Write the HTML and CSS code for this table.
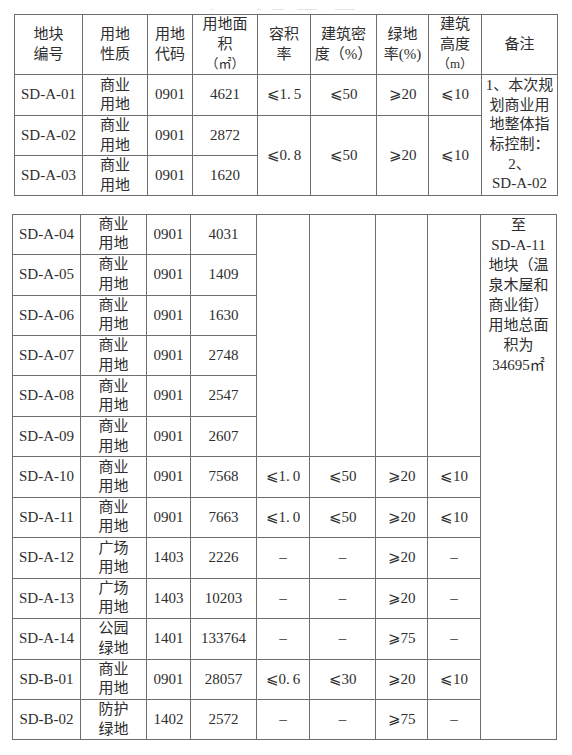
FILE: index.html
```html
<!DOCTYPE html>
<html lang="zh-CN">
<head>
<meta charset="utf-8">
<title>用地指标表</title>
<link rel="stylesheet" href="styles.css">
</head>
<body>
<div class="page">
  <div class="cutline">
    <span class="mk m1"></span><span class="mk m2"></span><span class="mk m3"></span><span class="mk m4"></span><span class="mk m5"></span>
  </div>
  <table class="grid t1">
    <colgroup>
      <col class="c1"><col class="c2"><col class="c3"><col class="c4"><col class="c5"><col class="c6"><col class="c7"><col class="c8"><col class="c9">
    </colgroup>
    <tr class="head">
      <td>地块<br>编号</td>
      <td>用地<br>性质</td>
      <td>用地<br>代码</td>
      <td>用地面<br>积<br><span class="unit">（㎡）</span></td>
      <td>容积<br>率</td>
      <td>建筑密<br>度（%）</td>
      <td>绿地<br>率(%)</td>
      <td>建筑<br>高度<br><span class="unit">（m）</span></td>
      <td>备注</td>
    </tr>
    <tr class="r41">
      <td>SD-A-01</td><td>商业<br>用地</td><td>0901</td><td>4621</td><td>⩽1.&#8201;5</td><td>⩽50</td><td>⩾20</td><td>⩽10</td>
      <td rowspan="3" class="note">1、本次规<br>划商业用<br>地整体指<br>标控制：<br>2、<br>SD-A-02</td>
    </tr>
    <tr class="r40">
      <td>SD-A-02</td><td>商业<br>用地</td><td>0901</td><td>2872</td>
      <td rowspan="2">⩽0.&#8201;8</td><td rowspan="2">⩽50</td><td rowspan="2">⩾20</td><td rowspan="2">⩽10</td>
    </tr>
    <tr class="r40">
      <td>SD-A-03</td><td>商业<br>用地</td><td>0901</td><td>1620</td>
    </tr>
  </table>

  <table class="grid t2">
    <colgroup>
      <col class="d1"><col class="d2"><col class="d3"><col class="d4"><col class="d5"><col class="d6"><col class="d7"><col class="d8"><col class="d9">
    </colgroup>
    <tr>
      <td>SD-A-04</td><td>商业<br>用地</td><td>0901</td><td>4031</td>
      <td rowspan="6"></td><td rowspan="6"></td><td rowspan="6"></td><td rowspan="6"></td>
      <td rowspan="13" class="note top">至<br>SD-A-11<br>地块（温<br>泉木屋和<br>商业街）<br>用地总面<br>积为<br>34695㎡</td>
    </tr>
    <tr><td>SD-A-05</td><td>商业<br>用地</td><td>0901</td><td>1409</td></tr>
    <tr><td>SD-A-06</td><td>商业<br>用地</td><td>0901</td><td>1630</td></tr>
    <tr><td>SD-A-07</td><td>商业<br>用地</td><td>0901</td><td>2748</td></tr>
    <tr><td>SD-A-08</td><td>商业<br>用地</td><td>0901</td><td>2547</td></tr>
    <tr><td>SD-A-09</td><td>商业<br>用地</td><td>0901</td><td>2607</td></tr>
    <tr><td>SD-A-10</td><td>商业<br>用地</td><td>0901</td><td>7568</td><td>⩽1.&#8201;0</td><td>⩽50</td><td>⩾20</td><td>⩽10</td></tr>
    <tr><td>SD-A-11</td><td>商业<br>用地</td><td>0901</td><td>7663</td><td>⩽1.&#8201;0</td><td>⩽50</td><td>⩾20</td><td>⩽10</td></tr>
    <tr><td>SD-A-12</td><td>广场<br>用地</td><td>1403</td><td>2226</td><td>–</td><td>–</td><td>⩾20</td><td>–</td></tr>
    <tr><td>SD-A-13</td><td>广场<br>用地</td><td>1403</td><td>10203</td><td>–</td><td>–</td><td>⩾20</td><td>–</td></tr>
    <tr><td>SD-A-14</td><td>公园<br>绿地</td><td>1401</td><td>133764</td><td>–</td><td>–</td><td>⩾75</td><td>–</td></tr>
    <tr><td>SD-B-01</td><td>商业<br>用地</td><td>0901</td><td>28057</td><td>⩽0.&#8201;6</td><td>⩽30</td><td>⩾20</td><td>⩽10</td></tr>
    <tr><td>SD-B-02</td><td>防护<br>绿地</td><td>1402</td><td>2572</td><td>–</td><td>–</td><td>⩾75</td><td>–</td></tr>
  </table>
</div>
</body>
</html>
```

FILE: styles.css
```css
html, body {
  margin: 0;
  padding: 0;
  background: #ffffff;
}

.page {
  display: flex;
  flex-direction: column;
  width: 572px;
  height: 755px;
  overflow: hidden;
  font-family: "Liberation Serif", "DejaVu Serif", "Noto Sans CJK SC", serif;
  color: #2e2e2e;
}

.cutline {
  height: 14px;
  position: relative;
}

.mk {
  position: absolute;
  top: 9px;
  height: 1px;
  background: #e4e4e4;
}
.m1 { left: 210px; width: 3px; }
.m2 { left: 257px; width: 4px; }
.m3 { left: 272px; width: 12px; }
.m4 { left: 297px; width: 20px; }
.m5 { left: 335px; width: 20px; }

.grid {
  border-collapse: collapse;
  table-layout: fixed;
}

.grid td {
  border: 1px solid #6e6e6e;
  padding: 0;
  text-align: center;
  vertical-align: middle;
  font-size: 15px;
  line-height: 19.4px;
  white-space: nowrap;
}

.t1 {
  width: 543px;
  margin-left: 14px;
}

.t1 .c1 { width: 68px; }
.t1 .c2 { width: 65px; }
.t1 .c3 { width: 45px; }
.t1 .c4 { width: 65px; }
.t1 .c5 { width: 53px; }
.t1 .c6 { width: 66px; }
.t1 .c7 { width: 52px; }
.t1 .c8 { width: 53px; }
.t1 .c9 { width: 76px; }

.t1 .head { height: 60px; }
.t1 .head td { line-height: 19.4px; }
.t1 .r41 { height: 41px; }
.t1 .r40 { height: 40px; }

.unit {
  font-size: 13px;
}

.t2 {
  width: 544px;
  margin-left: 12px;
  margin-top: 17.7px;
}

.t2 .d1 { width: 68px; }
.t2 .d2 { width: 66px; }
.t2 .d3 { width: 44px; }
.t2 .d4 { width: 66px; }
.t2 .d5 { width: 53px; }
.t2 .d6 { width: 66px; }
.t2 .d7 { width: 52px; }
.t2 .d8 { width: 53px; }
.t2 .d9 { width: 76px; }

.t2 tr { height: 40.45px; }

.grid td.note {
  line-height: 19.6px;
}

.grid td.note.top {
  vertical-align: top;
  line-height: 20px;
}
```
